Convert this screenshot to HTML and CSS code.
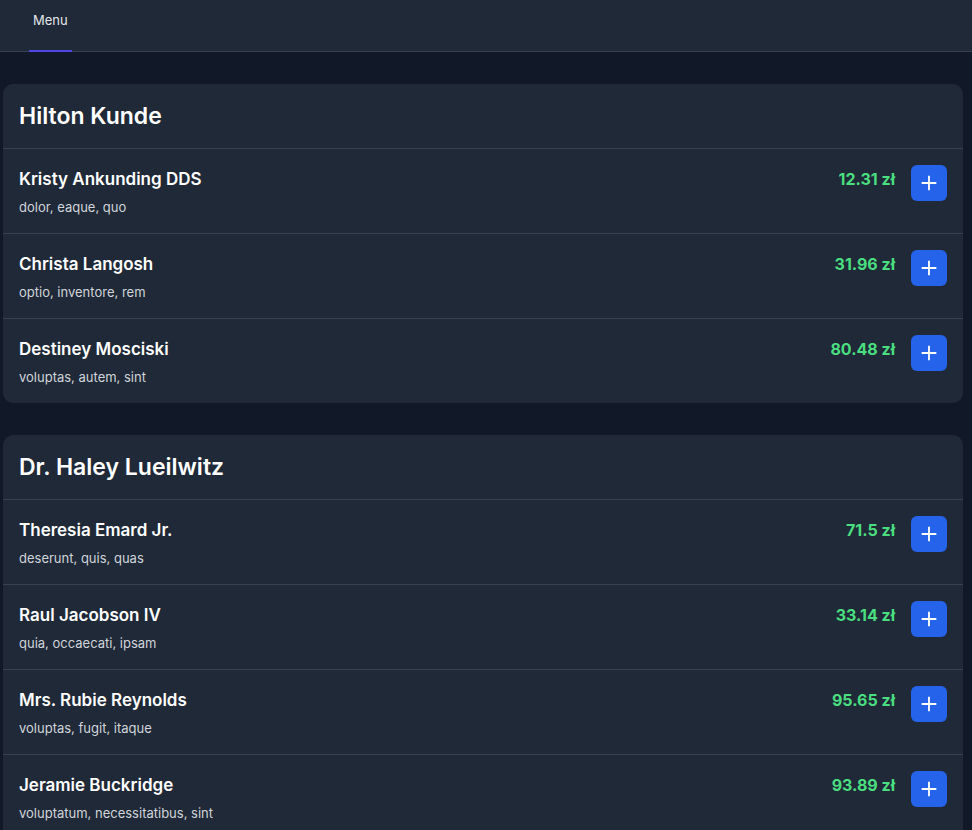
FILE: index.html
```html
<!DOCTYPE html>
<html lang="pl">
<head>
<meta charset="utf-8">
<title>Menu</title>
<link rel="stylesheet" href="styles.css">
</head>
<body>
<nav class="topbar">
  <a class="tab tab-active">Menu</a>
</nav>
<main class="content">
  <section class="card">
    <h2 class="card-title">Hilton Kunde</h2>
    <div class="item">
      <div class="item-info"><div class="item-name">Kristy Ankunding DDS</div><div class="item-desc">dolor, eaque, quo</div></div>
      <div class="item-side"><span class="price">12.31 zł</span><button class="add"><svg viewBox="0 0 24 24" width="24" height="24"><path d="M12 4v16M4 12h16" stroke="#fff" stroke-width="2" fill="none"/></svg></button></div>
    </div>
    <div class="item">
      <div class="item-info"><div class="item-name">Christa Langosh</div><div class="item-desc">optio, inventore, rem</div></div>
      <div class="item-side"><span class="price">31.96 zł</span><button class="add"><svg viewBox="0 0 24 24" width="24" height="24"><path d="M12 4v16M4 12h16" stroke="#fff" stroke-width="2" fill="none"/></svg></button></div>
    </div>
    <div class="item">
      <div class="item-info"><div class="item-name">Destiney Mosciski</div><div class="item-desc">voluptas, autem, sint</div></div>
      <div class="item-side"><span class="price">80.48 zł</span><button class="add"><svg viewBox="0 0 24 24" width="24" height="24"><path d="M12 4v16M4 12h16" stroke="#fff" stroke-width="2" fill="none"/></svg></button></div>
    </div>
  </section>
  <section class="card">
    <h2 class="card-title">Dr. Haley Lueilwitz</h2>
    <div class="item">
      <div class="item-info"><div class="item-name">Theresia Emard Jr.</div><div class="item-desc">deserunt, quis, quas</div></div>
      <div class="item-side"><span class="price">71.5 zł</span><button class="add"><svg viewBox="0 0 24 24" width="24" height="24"><path d="M12 4v16M4 12h16" stroke="#fff" stroke-width="2" fill="none"/></svg></button></div>
    </div>
    <div class="item">
      <div class="item-info"><div class="item-name">Raul Jacobson IV</div><div class="item-desc">quia, occaecati, ipsam</div></div>
      <div class="item-side"><span class="price">33.14 zł</span><button class="add"><svg viewBox="0 0 24 24" width="24" height="24"><path d="M12 4v16M4 12h16" stroke="#fff" stroke-width="2" fill="none"/></svg></button></div>
    </div>
    <div class="item">
      <div class="item-info"><div class="item-name">Mrs. Rubie Reynolds</div><div class="item-desc">voluptas, fugit, itaque</div></div>
      <div class="item-side"><span class="price">95.65 zł</span><button class="add"><svg viewBox="0 0 24 24" width="24" height="24"><path d="M12 4v16M4 12h16" stroke="#fff" stroke-width="2" fill="none"/></svg></button></div>
    </div>
    <div class="item">
      <div class="item-info"><div class="item-name">Jeramie Buckridge</div><div class="item-desc">voluptatum, necessitatibus, sint</div></div>
      <div class="item-side"><span class="price">93.89 zł</span><button class="add"><svg viewBox="0 0 24 24" width="24" height="24"><path d="M12 4v16M4 12h16" stroke="#fff" stroke-width="2" fill="none"/></svg></button></div>
    </div>
  </section>
</main>
</body>
</html>
```
FILE: styles.css
```css
* { box-sizing: border-box; }
html, body { margin: 0; padding: 0; }
body {
  background: #111827;
  font-family: "Inter", "Noto Sans", sans-serif;
  color: #f9fafb;
  overflow: hidden;
}
.topbar {
  height: 52px;
  background: #1f2937;
  border-bottom: 1px solid #374151;
  display: flex;
  align-items: stretch;
  padding-left: 29px;
}
.tab {
  display: flex;
  align-items: flex-start;
  padding: 11px 4px 0;
  font-size: 13px;
  line-height: 18px;
  color: #e5e7eb;
  border-bottom: 2px solid transparent;
  margin-bottom: -1px;
}
.tab-active { border-bottom-color: #4f46e5; }
.content {
  padding: 32px 9px 32px 3px;
  display: flex;
  flex-direction: column;
  gap: 32px;
}
.card {
  background: #1f2937;
  border-radius: 10px;
}
.card-title {
  margin: 0;
  padding: 16px;
  font-size: 23px;
  line-height: 32px;
  font-weight: 600;
  color: #fff;
  border-bottom: 1px solid #374151;
}
.item {
  display: flex;
  justify-content: space-between;
  align-items: flex-start;
  padding: 16px;
  border-bottom: 1px solid #374151;
}
.item:last-child { border-bottom: none; }
.item-name {
  font-size: 17px;
  line-height: 28px;
  font-weight: 600;
  color: #fff;
}
.item-desc {
  margin-top: 4px;
  font-size: 13px;
  line-height: 20px;
  color: #d1d5db;
}
.item-side {
  display: flex;
  align-items: flex-start;
  gap: 16px;
}
.price {
  font-size: 16px;
  line-height: 28px;
  font-weight: 700;
  color: #4ade80;
}
.add {
  width: 36px;
  height: 36px;
  border: none;
  border-radius: 6px;
  background: #2563eb;
  display: flex;
  align-items: center;
  justify-content: center;
  padding: 0;
}
.add svg { width: 22px; height: 22px; }
```
